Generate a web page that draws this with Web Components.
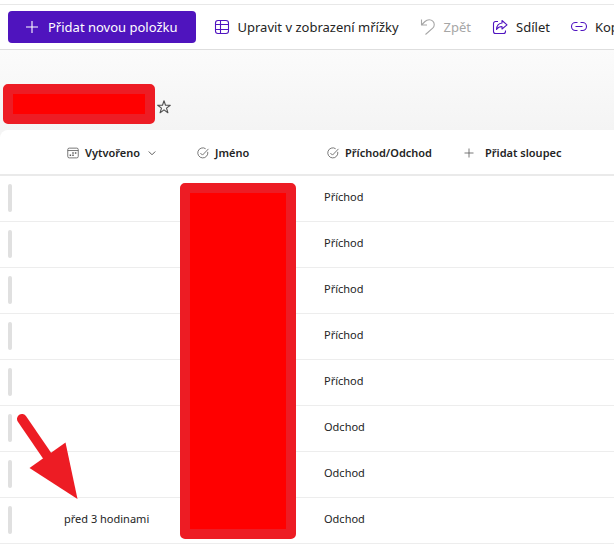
<!DOCTYPE html>
<html lang="cs">
<head>
<meta charset="utf-8">
<meta name="viewport" content="width=device-width, initial-scale=1">
<title>Seznam</title>
<style>
  body {
    margin: 0;
    min-height: 100vh;
    overflow-x: hidden;
    background: #fff;
    color: #242424;
    font: 13px/20px "Noto Sans", "Open Sans", sans-serif;
  }
</style>
</head>
<body>
<list-page>
  <command-bar slot="commands">
    <command-button icon="plus" primary>Přidat novou položku</command-button>
    <command-button icon="grid">Upravit v zobrazení mřížky</command-button>
    <command-button icon="undo" disabled>Zpět</command-button>
    <command-button icon="share">Sdílet</command-button>
    <command-button icon="link">Kopírovat odkaz</command-button>
  </command-bar>
  <list-title slot="title"></list-title>
  <list-table></list-table>
  <pointer-arrow></pointer-arrow>
</list-page>

<script>
const ICONS = {
  plus: `<path d="M8 2v12M2 8h12"/>`,
  grid: `<rect x="1.5" y="1.5" width="13" height="13" rx="2.5"/><path d="M6.500 1.500v13M1.500 5.500h13M1.500 10.500h13"/>`,
  undo: `<path d="M1.500 .5v5.500h5.500M1.500 6L5 2.500C7.500 0 11 .3 12.800 2.200C14.800 4.200 14.700 7.200 12.700 9.200L5.500 15.500"/>`,
  share: `<path d="M6 2.500H3.500A2 2 0 0 0 1.500 4.500V12.500A2 2 0 0 0 3.500 14.500H11.500A2 2 0 0 0 13.500 12.500V11.500"/><path d="M10 1.500L15 5.800L10 10V7.500C7.500 7.500 5.800 8.500 4.500 10.500C4.700 6.800 6.700 4.300 10 4Z"/>`,
  link: `<path d="M6.500 3.500H4.500A4 4 0 0 0 4.500 11.500H6.500M9.500 3.500H11.500A4 4 0 0 1 11.500 11.500H9.500M4.500 7.500H11.500"/>`,
  star: `<path d="M8 1.800L9.500 6.200H14.300L10.500 9.100L11.900 13.700L8 10.900L4.100 13.700L5.500 9.100L1.700 6.200H6.500Z"/>`,
  calendar: `<rect x="1" y="1.500" width="14" height="13" rx="2"/><path d="M1 4.700h14"/><path d="M7 8h2M10.500 8h2M3.500 11h2M7 11h2" stroke-width="1.800"/>`,
  check: `<path d="M14.300 6.500A6.700 6.700 0 1 1 11.500 2.300"/><path d="M4.500 8L7.300 10.800L15.300 2.500"/>`,
  chevron: `<path d="M1.500 5L8 11.500L14.500 5" stroke-width="2"/>`,
};

class UiIcon extends HTMLElement {
  constructor() {
    super();
    this.attachShadow({ mode: "open" });
  }

  connectedCallback() {
    this.shadowRoot.innerHTML = `
    <style>
      :host {
        display: inline-flex;
        flex: none;
        width: var(--icon-size, 16px);
        height: var(--icon-size, 16px);
      }
      svg {
        width: 100%;
        height: 100%;
        overflow: visible;
        fill: none;
        stroke: currentColor;
        stroke-width: 1.1;
        stroke-linejoin: round;
      }
    </style>
    <svg viewBox="0 0 16 16" aria-hidden="true">${ICONS[this.getAttribute("name")]}</svg>`;
  }
}

class CommandBar extends HTMLElement {
  constructor() {
    super();
    this.attachShadow({ mode: "open" });
    this.shadowRoot.innerHTML = `
    <style>
      :host {
        display: flex;
        align-items: center;
        height: 44px;
        padding-left: 8px;
        overflow: hidden;
        background: #fff;
        border-top: 1px solid #e8e8e8;
        border-bottom: 1px solid #dedede;
      }
    </style>
    <slot></slot>`;
  }
}

class CommandButton extends HTMLElement {
  constructor() {
    super();
    this.attachShadow({ mode: "open" });
  }

  connectedCallback() {
    const disabled = this.hasAttribute("disabled") ? "disabled" : "";
    this.shadowRoot.innerHTML = `
    <style>
      :host {
        display: block;
        flex: none;
      }
      :host([primary]) {
        margin-right: 8px;
      }
      button {
        display: flex;
        align-items: center;
        gap: 8px;
        height: 32px;
        padding: 0 11px 0 10px;
        border: 0;
        border-radius: 4px;
        background: none;
        color: inherit;
        font: inherit;
        white-space: nowrap;
      }
      ui-icon {
        color: #5014c0;
      }
      :host([primary]) button {
        padding: 0 18px 0 16px;
        background: #4f14be;
        color: #fff;
      }
      :host([primary]) ui-icon {
        color: #fff;
      }
      button:disabled,
      button:disabled ui-icon {
        color: #a6a6a6;
      }
    </style>
    <button type="button" ${disabled}>
      <ui-icon name="${this.getAttribute("icon")}"></ui-icon>
      <span><slot></slot></span>
    </button>`;
  }
}

// Solid block that hides private content
class RedactedBlock extends HTMLElement {
  constructor() {
    super();
    this.attachShadow({ mode: "open" });
    this.shadowRoot.innerHTML = `
    <style>
      :host {
        display: block;
        box-sizing: border-box;
        border: 10px solid #ed1c24;
        border-radius: 5px;
        background: #f00;
      }
    </style>`;
  }
}

class ListTitle extends HTMLElement {
  constructor() {
    super();
    this.attachShadow({ mode: "open" });
    this.shadowRoot.innerHTML = `
    <style>
      :host {
        display: flex;
        align-items: center;
        gap: 1px;
        padding: 34px 3px 6px;
      }
      redacted-block {
        width: 152px;
        height: 40px;
      }
      button {
        display: flex;
        padding: 6px 0 0;
        border: 0;
        background: none;
        color: #505050;
      }
    </style>
    <redacted-block></redacted-block>
    <button type="button" aria-label="Oblíbené"><ui-icon name="star"></ui-icon></button>`;
  }
}

class ListTable extends HTMLElement {
  constructor() {
    super();
    this.attachShadow({ mode: "open" });
    this.rows = [
      ["", "Příchod"],
      ["", "Příchod"],
      ["", "Příchod"],
      ["", "Příchod"],
      ["", "Příchod"],
      ["", "Odchod"],
      ["", "Odchod"],
      ["před 3 hodinami", "Odchod"],
    ];
    this.shadowRoot.innerHTML = this._render();
  }

  _renderRow([created, state]) {
    return `
      <tr>
        <td class="marker"><i></i></td>
        <td>${created}</td>
        <td></td>
        <td>${state}</td>
        <td></td>
      </tr>`;
  }

  _render() {
    return `
    <style>
      :host {
        display: block;
        position: relative;
        background: #fff;
        border-top-left-radius: 8px;
        font-size: 11px;
        line-height: 16px;
      }
      table {
        width: 100%;
        table-layout: fixed;
        border-collapse: separate;
        border-spacing: 0;
      }
      .select { width: 56px; }
      .field { width: 130px; }
      th, td {
        box-sizing: border-box;
        text-align: left;
        white-space: nowrap;
      }
      th {
        height: 46px;
        padding: 2px 0 0 11px;
        border-bottom: 2px solid #eaeaea;
      }
      td {
        height: 46px;
        padding: 0 8px 4px;
        border-bottom: 1px solid #ededed;
      }
      .marker {
        padding: 0 8px 2px;
      }
      .marker i {
        display: block;
        width: 4px;
        height: 28px;
        border-radius: 2px;
        background: #e0e0e0;
      }
      button {
        display: flex;
        align-items: center;
        gap: 6px;
        padding: 0;
        border: 0;
        background: none;
        color: inherit;
        font: inherit;
        font-weight: 600;
        --icon-size: 12px;
      }
      ui-icon {
        color: #5c5c5c;
      }
      .chevron {
        --icon-size: 8px;
        margin-left: 2px;
      }
      .add {
        padding-left: 6px;
        gap: 10px;
      }
      redacted-block {
        position: absolute;
        left: 180px;
        top: 53px;
        bottom: 5px;
        width: 116px;
      }
    </style>
    <table>
      <colgroup>
        <col class="select"><col class="field"><col class="field"><col class="field"><col>
      </colgroup>
      <thead>
        <tr>
          <th></th>
          <th><button type="button"><ui-icon name="calendar"></ui-icon>Vytvořeno<ui-icon class="chevron" name="chevron"></ui-icon></button></th>
          <th><button type="button"><ui-icon name="check"></ui-icon>Jméno</button></th>
          <th><button type="button"><ui-icon name="check"></ui-icon>Příchod/Odchod</button></th>
          <th><button type="button" class="add"><ui-icon name="plus"></ui-icon>Přidat sloupec</button></th>
        </tr>
      </thead>
      <tbody>${this.rows.map(this._renderRow).join("")}</tbody>
    </table>
    <redacted-block></redacted-block>`;
  }
}

// Annotation arrow lying over the list
class PointerArrow extends HTMLElement {
  constructor() {
    super();
    this.attachShadow({ mode: "open" });
    this.shadowRoot.innerHTML = `
    <style>
      :host {
        display: block;
        position: absolute;
        left: 16px;
        top: 412px;
        pointer-events: none;
      }
      svg { display: block; }
    </style>
    <svg width="64" height="88" viewBox="0 0 64 88" aria-hidden="true">
      <path d="M6 7L32 45" stroke="#ed1c24" stroke-width="10" stroke-linecap="round"/>
      <path d="M49.500 30.500L61.500 87L13.500 56Z" fill="#ed1c24"/>
    </svg>`;
  }
}

class ListPage extends HTMLElement {
  constructor() {
    super();
    this.attachShadow({ mode: "open" });
    this.shadowRoot.innerHTML = `
    <style>
      :host {
        display: block;
        position: relative;
        padding-top: 4px;
      }
      main {
        background: linear-gradient(#fbfbfb, #f4f4f4 80px);
      }
    </style>
    <slot name="commands"></slot>
    <main>
      <slot name="title"></slot>
      <slot></slot>
    </main>`;
  }
}

customElements.define("ui-icon", UiIcon);
customElements.define("command-bar", CommandBar);
customElements.define("command-button", CommandButton);
customElements.define("redacted-block", RedactedBlock);
customElements.define("list-title", ListTitle);
customElements.define("list-table", ListTable);
customElements.define("pointer-arrow", PointerArrow);
customElements.define("list-page", ListPage);
</script>
</body>
</html>
